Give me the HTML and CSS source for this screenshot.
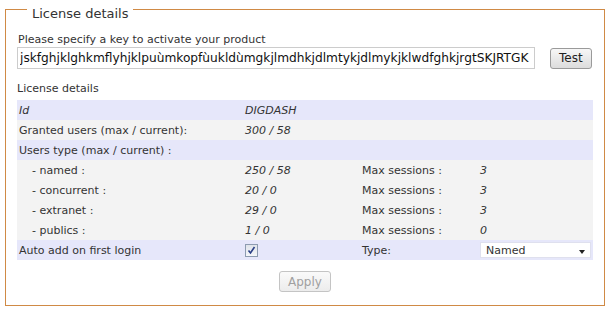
FILE: index.html
```html
<!DOCTYPE html>
<html lang="en">
<head>
    <meta charset="UTF-8">
    <title>License details</title>
    <link rel="stylesheet" href="styles.css">
</head>
<body>
    <fieldset class="license-box">
        <legend>License details</legend>
        <p class="key-label">Please specify a key to activate your product</p>
        <div class="key-row">
            <input type="text" class="key-input" value="jskfghjklghkmflyhjklpuùmkopfùukldùmgkjlmdhkjdlmtykjdlmykjklwdfghkjrgtSKJRTGK">
            <button class="btn">Test</button>
        </div>
        <p class="details-label">License details</p>
        <table class="details">
            <tr class="alt">
                <td class="val">Id</td>
                <td class="val">DIGDASH</td>
                <td></td>
                <td></td>
            </tr>
            <tr>
                <td>Granted users (max / current):</td>
                <td class="val">300 / 58</td>
                <td></td>
                <td></td>
            </tr>
            <tr class="alt">
                <td>Users type (max / current) :</td>
                <td></td>
                <td></td>
                <td></td>
            </tr>
            <tr>
                <td class="sub">- named :</td>
                <td class="val">250 / 58</td>
                <td>Max sessions :</td>
                <td class="val">3</td>
            </tr>
            <tr>
                <td class="sub">- concurrent :</td>
                <td class="val">20 / 0</td>
                <td>Max sessions :</td>
                <td class="val">3</td>
            </tr>
            <tr>
                <td class="sub">- extranet :</td>
                <td class="val">29 / 0</td>
                <td>Max sessions :</td>
                <td class="val">3</td>
            </tr>
            <tr>
                <td class="sub">- publics :</td>
                <td class="val">1 / 0</td>
                <td>Max sessions :</td>
                <td class="val">0</td>
            </tr>
            <tr class="alt">
                <td>Auto add on first login</td>
                <td>
                    <span class="check">
                        <svg width="9" height="9" viewBox="0 0 9 9"><path d="M1.5 4.5 L3.5 7 L7.5 1" fill="none" stroke="#2a3f86" stroke-width="1.6"/></svg>
                    </span>
                </td>
                <td>Type:</td>
                <td>
                    <div class="select">
                        <span>Named</span>
                        <span class="arrow"></span>
                    </div>
                </td>
            </tr>
        </table>
        <div class="actions">
            <button class="btn" disabled>Apply</button>
        </div>
    </fieldset>
</body>
</html>
```

FILE: styles.css
```css
body {
    margin: 0;
    font-family: "DejaVu Sans", Verdana, sans-serif;
    font-size: 11px;
    color: #333;
}
.license-box {
    width: 576px;
    margin: 0 0 0 5px;
    padding: 0 11px 13px 11px;
    border: 1px solid #d08a45;
}
.license-box legend {
    font-size: 13px;
    line-height: 8px;
    padding: 10px 5px 0 5px;
    margin-left: 10px;
    color: #333;
}
.key-label {
    margin: 15px 0 1px 1px;
    line-height: 13px;
}
.key-row {
    display: flex;
    align-items: center;
    gap: 15px;
}
.key-input {
    width: 518px;
    height: 22px;
    box-sizing: border-box;
    margin: 0;
    padding: 0 2px;
    border: 1px solid #ccc;
    font-family: "DejaVu Sans", Verdana, sans-serif;
    font-size: 12.2px;
    color: #111;
}
.btn {
    height: 21px;
    padding: 0 8px;
    border: 1px solid #9a9a9a;
    border-radius: 3px;
    background: linear-gradient(#f7f7f7, #dcdcdc);
    font-family: "DejaVu Sans", Verdana, sans-serif;
    font-size: 12px;
    color: #222;
}
.btn:disabled {
    color: #a0a0a0;
    border-color: #c4c4c4;
    background: linear-gradient(#fafafa, #ececec);
}
.details-label {
    margin: 13px 0 5px 0;
    line-height: 13px;
}
.details {
    width: 576px;
    border-collapse: collapse;
    table-layout: fixed;
}
.details td {
    height: 20px;
    padding: 0 0 0 2px;
    white-space: nowrap;
}
.details td:nth-child(1) { width: 224px; }
.details td:nth-child(2) { width: 115px; }
.details td:nth-child(3) { width: 116px; }
.details tr {
    background: #f3f3f3;
}
.details tr.alt {
    background: #e6e7fa;
}
.details .val {
    font-style: italic;
}
.details .sub {
    padding-left: 15px;
}
.check {
    display: inline-flex;
    align-items: center;
    justify-content: center;
    width: 11px;
    height: 11px;
    border: 1px solid #8d9bb0;
    background: linear-gradient(#dfe3ea, #f4f6f9);
    vertical-align: middle;
}
.select {
    display: flex;
    align-items: center;
    justify-content: space-between;
    width: 111px;
    height: 16px;
    box-sizing: border-box;
    padding: 0 5px;
    background: #fff;
    border: 1px solid #dfe0ee;
}
.arrow {
    width: 0;
    height: 0;
    border-left: 3px solid transparent;
    border-right: 3px solid transparent;
    border-top: 4px solid #222;
    margin-top: 3px;
}
.actions {
    display: flex;
    justify-content: center;
    margin-top: 11px;
}
```
